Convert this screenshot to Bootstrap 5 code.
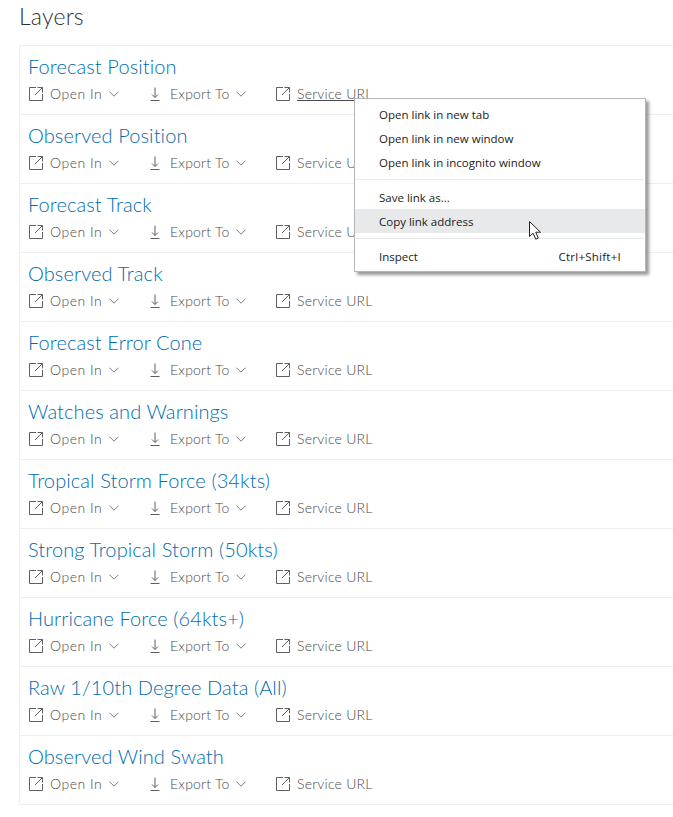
<!DOCTYPE html>
<html lang="en">
<head>
    <meta charset="UTF-8">
    <meta name="viewport" content="width=device-width, initial-scale=1.0">
    <title>Layers</title>
    <link href="https://cdn.jsdelivr.net/npm/bootstrap@5.3.0/dist/css/bootstrap.min.css" rel="stylesheet">
    <style>
        body {
            font-family: Lato, "Liberation Sans", sans-serif;
            background-color: #fff;
            overflow: hidden;
            color: #6e6e6e;
        }
        .page-wrap {
            padding-left: 19px;
            padding-top: 2px;
        }
        .layers-title {
            font-size: 23px;
            line-height: 28px;
            font-weight: 300;
            letter-spacing: .2px;
            color: #323232;
            margin: 0 0 15px 0;
        }
        .layer-list {
            border: 1px solid #efefef;
            border-right: 0;
        }
        .layer-row {
            height: 69px;
            padding: 7px 0 0 8px;
            border-bottom: 1px solid #efefef;
        }
        .layer-row:last-child {
            border-bottom: 0;
            height: 68px;
        }
        .layer-name {
            display: block;
            font-size: 20px;
            line-height: 26px;
            font-weight: 300;
            letter-spacing: .1px;
            color: #006cb0;
            text-decoration: none;
        }
        .layer-actions {
            margin-top: 5px;
            font-size: 14px;
            line-height: 20px;
            font-weight: 300;
            letter-spacing: .22px;
        }
        .layer-action {
            display: flex;
            align-items: center;
            color: #4a4a4a;
            text-decoration: none;
        }
        .act-open { width: 120px; }
        .act-open span { letter-spacing: .5px; }
        .act-export { width: 127px; padding-left: 2px; }
        .act-export svg.dl { margin-right: 10px; }
        .act-export .act-caret { margin-left: 6px; }
        .act-open svg.ext, .act-service svg.ext { margin-left: 1px; margin-right: 7px; }
        .act-caret { margin-left: 7px; }
        .act-service.hovered span { text-decoration: underline; }
        .ctx-menu {
            position: absolute;
            left: 354px;
            top: 98px;
            width: 292px;
            height: 174px;
            background: #fff;
            border: 1px solid #b5b5b5;
            box-shadow: 3px 3px 3px rgba(0,0,0,.4);
            font-family: "Open Sans", "Noto Sans", sans-serif;
            font-size: 11.5px;
            color: #1a1a1a;
            padding-top: 4px;
        }
        .ctx-item {
            height: 24px;
            line-height: 24px;
            padding: 0 24px;
            display: flex;
            justify-content: space-between;
        }
        .ctx-item.nudge { padding-top: 1px; }
        .ctx-item.active-item { background: #e8e9eb; }
        .ctx-sep {
            height: 1px;
            background: #e9e9e9;
            margin: 4px 1px 5px 1px;
        }
        .ctx-sep.lower-sep { margin: 5px 1px 6px 1px; }
        .ctx-shortcut { letter-spacing: .25px; }
        .ctx-cursor {
            position: absolute;
            left: 173px;
            top: 121px;
        }
    </style>
</head>
<body>

<div class="page-wrap">
    <h2 class="layers-title">Layers</h2>
    <div class="layer-list" id="layerList"></div>
</div>

<!-- right click menu over the list -->
<div class="ctx-menu">
    <div class="ctx-item"><span>Open link in new tab</span></div>
    <div class="ctx-item"><span>Open link in new window</span></div>
    <div class="ctx-item"><span>Open link in incognito window</span></div>
    <div class="ctx-sep"></div>
    <div class="ctx-item nudge"><span>Save link as...</span></div>
    <div class="ctx-item nudge active-item"><span>Copy link address</span></div>
    <div class="ctx-sep lower-sep"></div>
    <div class="ctx-item"><span>Inspect</span><span class="ctx-shortcut">Ctrl+Shift+I</span></div>
    <svg class="ctx-cursor" width="14" height="21" viewBox="0 0 14 21">
        <path d="M1.5 1.5v15l3.6-3.3 2.6 6 2.6-1.1-2.6-5.9h4.8z" fill="#fff" stroke="#222" stroke-width="1"/>
    </svg>
</div>

<script>
    const layerNames = [
        "Forecast Position", "Observed Position", "Forecast Track", "Observed Track",
        "Forecast Error Cone", "Watches and Warnings", "Tropical Storm Force (34kts)",
        "Strong Tropical Storm (50kts)", "Hurricane Force (64kts+)",
        "Raw 1/10th Degree Data (All)", "Observed Wind Swath"
    ];

    const extIcon = `<svg class="ext" width="14" height="14" viewBox="0 0 14 14" fill="none" stroke="#5f5f5f" stroke-width="1"><path d="M7 .5H.5v13h13V7M8.5 .5h5v5M13.5 .5 6 8"/></svg>`;
    const dlIcon = `<svg class="dl" width="10" height="14" viewBox="0 0 10 14" fill="none" stroke="#5f5f5f" stroke-width="1"><path d="M5 .5v10M2 7.5 5 10.5 8 7.5M.5 13.5h9"/></svg>`;
    const caret = `<svg class="act-caret" width="10" height="6" viewBox="0 0 10 6" fill="none" stroke="#6e6e6e" stroke-width=".9"><path d="M.5 .7 5 5.2 9.5 .7"/></svg>`;

    let list = document.getElementById('layerList');
    layerNames.forEach((name, i) => {
        list.insertAdjacentHTML('beforeend', `
            <div class="layer-row">
                <a href="#" class="layer-name">${name}</a>
                <div class="layer-actions d-flex">
                    <a href="#" class="layer-action act-open">${extIcon}<span>Open In</span>${caret}</a>
                    <a href="#" class="layer-action act-export">${dlIcon}<span>Export To</span>${caret}</a>
                    <a href="#" class="layer-action act-service${i === 0 ? ' hovered' : ''}">${extIcon}<span>Service URL</span></a>
                </div>
            </div>`);
    });
</script>

<script src="https://cdn.jsdelivr.net/npm/bootstrap@5.3.0/dist/js/bootstrap.bundle.min.js"></script>
</body>
</html>
